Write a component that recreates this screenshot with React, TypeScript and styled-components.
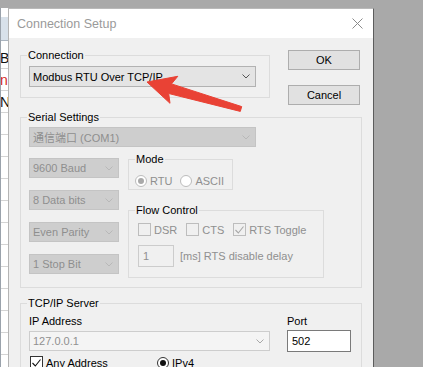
import React from "react";
import styled, { createGlobalStyle } from "styled-components";

const GlobalStyle = createGlobalStyle`
  html, body {
    margin: 0;
    padding: 0;
    background: #a9a9a9;
  }
  * {
    box-sizing: border-box;
  }
`;

const Screen = styled.div`
  position: relative;
  width: 423px;
  height: 367px;
  overflow: hidden;
  display: flex;
  align-items: flex-start;
  padding-top: 8px;
  background: #a9a9a9;
  font-family: "Liberation Sans", Arial, sans-serif;
  font-size: 11px;
  color: #000;
`;

// the window peeking out behind the dialog
const BackStrip = styled.div`
  width: 8px;
  height: 359px;
  flex-shrink: 0;
  overflow: hidden;
  background: #fff;
  border-left: 1px solid #9aa2ab;
`;
const BackHeader = styled.div`
  height: 9px;
  background: #fff;
`;
const BackHeaderCell = styled.div`
  height: 24px;
  background: #d8e1ea;
  border-bottom: 1px solid #aab4bf;
`;
const BackRows = styled.div`
  padding-top: 6px;
`;
const BackRow = styled.div<{ $red?: boolean }>`
  height: 22px;
  border-bottom: 1px solid #d4d4d4;
  display: flex;
  align-items: center;
  margin-left: -1px;
  font-size: 14px;
  color: ${({ $red }) => ($red ? "#d42a1e" : "#111")};
`;

const Dialog = styled.div`
  width: 366px;
  flex-shrink: 0;
  background: #f0f0f0;
  border-top: 1px solid #b9b9b9;
  border-left: 1px solid #b4b4b4;
  border-right: 1px solid #5c5c5c;
`;

const TitleBar = styled.div`
  height: 29px;
  background: #fff;
  display: flex;
  align-items: center;
  justify-content: space-between;
  padding: 0 10px 0 8px;
`;
const Title = styled.span`
  font-size: 12.5px;
  color: #9a9a9a;
`;

const Client = styled.div`
  display: flex;
  flex-direction: column;
  gap: 6px;
  padding: 11px 0 0 11px;
`;

const TopRow = styled.div`
  display: flex;
  align-items: flex-start;
  gap: 18px;
`;

const ButtonColumn = styled.div`
  display: flex;
  flex-direction: column;
  gap: 15px;
  margin-top: 1px;
`;

const PushButton = styled.button`
  width: 72px;
  height: 20px;
  margin: 0;
  padding: 0;
  background: #e1e1e1;
  border: 1px solid #adadad;
  font-family: inherit;
  font-size: 11px;
  color: #000;
`;

const GroupBox = styled.fieldset<{ $w: number; $top?: number }>`
  width: ${({ $w }) => $w}px;
  min-width: 0;
  margin: ${({ $top }) => $top ?? 0}px 0 0;
  padding: 0;
  border: 1px solid #dcdcdc;
`;
const GroupTitle = styled.legend`
  margin-left: 6px;
  padding: 0 1px;
  font-size: 11px;
  line-height: 13px;
  color: #000;
`;
const GroupBody = styled.div<{ $pad: string }>`
  padding: ${({ $pad }) => $pad};
`;

type ComboKind = "normal" | "disabled" | "editDisabled";
const comboColors: Record<ComboKind, { bg: string; border: string; text: string; arrow: string }> = {
  normal: { bg: "#e4e4e4", border: "#b2b2b2", text: "#000", arrow: "#555" },
  disabled: { bg: "#cecece", border: "#c4c4c4", text: "#8e8e8e", arrow: "#b8b8b8" },
  editDisabled: { bg: "#f4f4f4", border: "#cdcdcd", text: "#909090", arrow: "#a8a8a8" },
};

const Combo = styled.div<{ $w: number; $h?: number; $kind: ComboKind }>`
  width: ${({ $w }) => $w}px;
  height: ${({ $h }) => $h ?? 20}px;
  display: flex;
  align-items: center;
  justify-content: space-between;
  padding: 0 5px 0 3px;
  background: ${({ $kind }) => comboColors[$kind].bg};
  border: 1px solid ${({ $kind }) => comboColors[$kind].border};
  color: ${({ $kind }) => comboColors[$kind].text};
  white-space: nowrap;
  font-family: "Liberation Sans", "Noto Sans CJK SC", sans-serif;
`;

const Chevron = ({ color }: { color: string }) => (
  <svg width="8" height="5" viewBox="0 0 8 5">
    <polyline points="0.5,0.5 4,4 7.5,0.5" fill="none" stroke={color} strokeWidth="1" />
  </svg>
);

const ComboBox = ({ w, h, kind, text }: { w: number; h?: number; kind: ComboKind; text: string }) => (
  <Combo $w={w} $h={h} $kind={kind}>
    <span>{text}</span>
    <Chevron color={comboColors[kind].arrow} />
  </Combo>
);

const SerialRow = styled.div`
  display: flex;
  align-items: flex-start;
  gap: 9px;
  margin-top: 6px;
`;
const LeftColumn = styled.div`
  display: flex;
  flex-direction: column;
  gap: 12px;
  padding-top: 5px;
`;
const RightColumn = styled.div`
  display: flex;
  flex-direction: column;
  gap: 14px;
`;

const OptionRow = styled.div<{ $gap: number }>`
  display: flex;
  align-items: center;
  gap: ${({ $gap }) => $gap}px;
`;
const Option = styled.label<{ $disabled?: boolean }>`
  display: flex;
  align-items: center;
  gap: 3px;
  color: ${({ $disabled }) => ($disabled ? "#8f8f8f" : "#000")};
  white-space: nowrap;
`;

const RadioCircle = styled.span<{ $disabled?: boolean; $on?: boolean }>`
  width: 12px;
  height: 12px;
  border-radius: 50%;
  border: 1px solid ${({ $disabled }) => ($disabled ? "#bcbcbc" : "#333")};
  background: #fff;
  display: flex;
  align-items: center;
  justify-content: center;
  &::after {
    content: "";
    width: 6px;
    height: 6px;
    border-radius: 50%;
    background: ${({ $disabled }) => ($disabled ? "#a9a9a9" : "#111")};
    display: ${({ $on }) => ($on ? "block" : "none")};
  }
`;

const CheckSquare = styled.span<{ $disabled?: boolean }>`
  width: 13px;
  height: 13px;
  flex-shrink: 0;
  border: 1px solid ${({ $disabled }) => ($disabled ? "#bdbdbd" : "#333")};
  background: ${({ $disabled }) => ($disabled ? "#f0f0f0" : "#fff")};
  display: flex;
  align-items: center;
  justify-content: center;
`;

const Radio = ({ label, on, disabled }: { label: string; on?: boolean; disabled?: boolean }) => (
  <Option $disabled={disabled}>
    <RadioCircle $on={on} $disabled={disabled} />
    {label}
  </Option>
);

const Check = ({ label, on, disabled }: { label: string; on?: boolean; disabled?: boolean }) => (
  <Option $disabled={disabled}>
    <CheckSquare $disabled={disabled}>
      {on && (
        <svg width="9" height="8" viewBox="0 0 9 8">
          <polyline points="0.5,4 3.3,7 8.5,0.5" fill="none" stroke={disabled ? "#a8a8a8" : "#111"} strokeWidth="1.1" />
        </svg>
      )}
    </CheckSquare>
    {label}
  </Option>
);

const DelayRow = styled.div`
  display: flex;
  align-items: center;
  gap: 6px;
  margin-top: 9px;
`;
const TextBox = styled.div<{ $w: number; $disabled?: boolean }>`
  width: ${({ $w }) => $w}px;
  height: 22px;
  display: flex;
  align-items: center;
  padding-left: 4px;
  background: ${({ $disabled }) => ($disabled ? "#f0f0f0" : "#fff")};
  border: 1px solid ${({ $disabled }) => ($disabled ? "#cccccc" : "#7a7a7a")};
  color: ${({ $disabled }) => ($disabled ? "#8f8f8f" : "#000")};
`;
const HintText = styled.span`
  color: #8f8f8f;
`;

const ServerGrid = styled.div`
  display: grid;
  grid-template-columns: 241px 64px;
  column-gap: 17px;
`;
const Field = styled.div<{ $gap: number }>`
  display: flex;
  flex-direction: column;
  gap: ${({ $gap }) => $gap}px;
`;
const FieldLabel = styled.span`
  line-height: 13px;
`;
const AddressRow = styled.div`
  display: flex;
  align-items: center;
  margin: 4px 0 0 1px;
`;
const AddressSlot = styled.div`
  width: 127px;
`;

const CloseIcon = () => (
  <svg width="11" height="11" viewBox="0 0 11 11">
    <path d="M0.5 0.5 L10.5 10.5 M10.5 0.5 L0.5 10.5" stroke="#8a8a8a" strokeWidth="1" />
  </svg>
);

const Annotation = styled.svg`
  position: absolute;
  left: 0;
  top: 0;
  pointer-events: none;
`;

export default function App() {
  return (
    <>
      <GlobalStyle />
      <Screen>
        <BackStrip>
          <BackHeader />
          <BackHeaderCell />
          <BackRows>
            <BackRow>B</BackRow>
            <BackRow $red>n</BackRow>
            <BackRow>N</BackRow>
            {Array.from({ length: 11 }).map((_, i) => (
              <BackRow key={i} />
            ))}
          </BackRows>
        </BackStrip>

        <Dialog>
          <TitleBar>
            <Title>Connection Setup</Title>
            <CloseIcon />
          </TitleBar>

          <Client>
            <TopRow>
              <GroupBox $w={250}>
                <GroupTitle>Connection</GroupTitle>
                <GroupBody $pad="4px 13px 10px 8px">
                  <ComboBox w={227} h={21} kind="normal" text="Modbus RTU Over TCP/IP" />
                </GroupBody>
              </GroupBox>
              <ButtonColumn>
                <PushButton>OK</PushButton>
                <PushButton>Cancel</PushButton>
              </ButtonColumn>
            </TopRow>

            <GroupBox $w={342}>
              <GroupTitle>Serial Settings</GroupTitle>
              <GroupBody $pad="3px 0 9px 8px">
                <ComboBox w={227} kind="disabled" text="通信端口 (COM1)" />
                <SerialRow>
                  <LeftColumn>
                    <ComboBox w={90} kind="disabled" text="9600 Baud" />
                    <ComboBox w={90} kind="disabled" text="8 Data bits" />
                    <ComboBox w={90} kind="disabled" text="Even Parity" />
                    <ComboBox w={90} kind="disabled" text="1 Stop Bit" />
                  </LeftColumn>
                  <RightColumn>
                    <GroupBox $w={105}>
                      <GroupTitle>Mode</GroupTitle>
                      <GroupBody $pad="9px 0 2px 6px">
                        <OptionRow $gap={8}>
                          <Radio label="RTU" on disabled />
                          <Radio label="ASCII" disabled />
                        </OptionRow>
                      </GroupBody>
                    </GroupBox>
                    <GroupBox $w={196}>
                      <GroupTitle>Flow Control</GroupTitle>
                      <GroupBody $pad="6px 0 10px 9px">
                        <OptionRow $gap={9}>
                          <Check label="DSR" disabled />
                          <Check label="CTS" disabled />
                          <Check label="RTS Toggle" on disabled />
                        </OptionRow>
                        <DelayRow>
                          <TextBox $w={36} $disabled>1</TextBox>
                          <HintText>[ms] RTS disable delay</HintText>
                        </DelayRow>
                      </GroupBody>
                    </GroupBox>
                  </RightColumn>
                </SerialRow>
              </GroupBody>
            </GroupBox>

            <GroupBox $w={342} $top={3}>
              <GroupTitle>TCP/IP Server</GroupTitle>
              <GroupBody $pad="5px 0 12px 8px">
                <ServerGrid>
                  <Field $gap={3}>
                    <FieldLabel>IP Address</FieldLabel>
                    <ComboBox w={241} kind="editDisabled" text="127.0.0.1" />
                  </Field>
                  <Field $gap={2}>
                    <FieldLabel>Port</FieldLabel>
                    <TextBox $w={64}>502</TextBox>
                  </Field>
                </ServerGrid>
                <AddressRow>
                  <AddressSlot>
                    <Check label="Any Address" on />
                  </AddressSlot>
                  <Radio label="IPv4" on />
                </AddressRow>
              </GroupBody>
            </GroupBox>
          </Client>
        </Dialog>

        <Annotation width="423" height="367" viewBox="0 0 423 367">
          <polygon
            points="147,82 177.8,76.3 171.5,83.9 241.7,106.6 240.3,111.4 168.7,93.5 170,103.3"
            fill="#e94235"
            stroke="#e94235"
            strokeWidth="1"
            strokeLinejoin="round"
          />
        </Annotation>
      </Screen>
    </>
  );
}
